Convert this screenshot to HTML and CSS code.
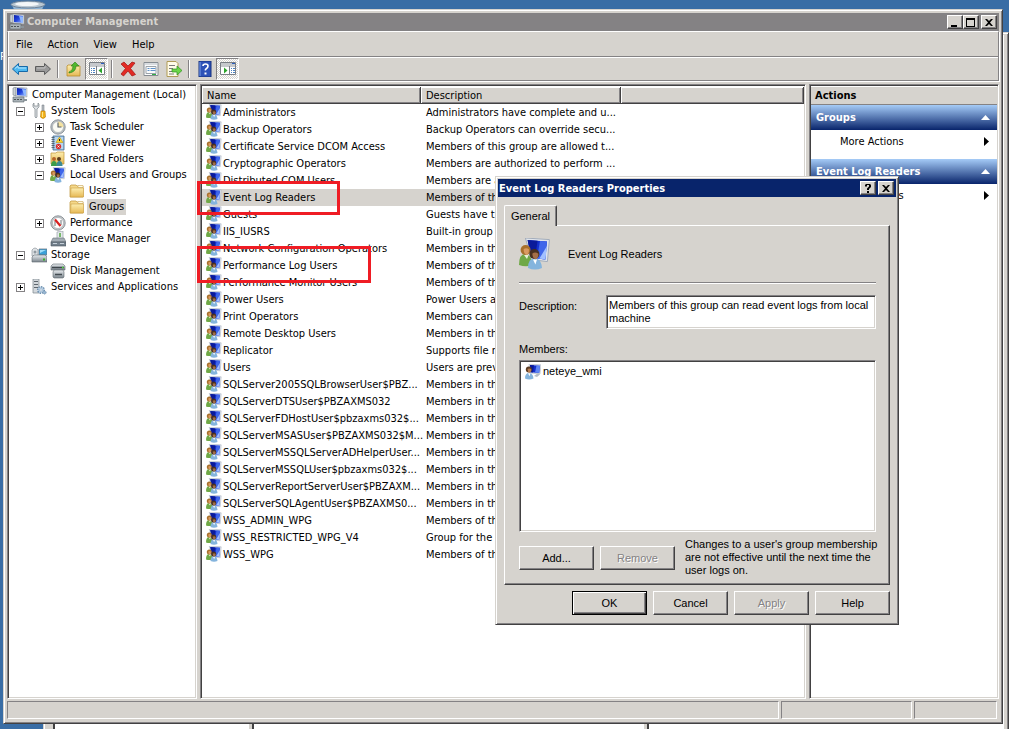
FILE: index.html
```html
<!DOCTYPE html>
<html lang="en">
  <head>
    <meta charset="UTF-8" />
    <title>Computer Management</title>
    <link rel="stylesheet" href="styles.css">
  </head>
  <body>
    <svg class="sprite" aria-hidden="true">
      <defs>
        <linearGradient id="screen" x1="0" y1="0" x2="1" y2="1">
          <stop offset="0" stop-color="#0a1ea8" />
          <stop offset="0.5" stop-color="#2448e0" />
          <stop offset="1" stop-color="#a9c8ff" />
        </linearGradient>
        <linearGradient id="manila" x1="0" y1="0" x2="0" y2="1">
          <stop offset="0" stop-color="#fdeeb0" />
          <stop offset="1" stop-color="#e6b955" />
        </linearGradient>
        <linearGradient id="metal" x1="0" y1="0" x2="0" y2="1">
          <stop offset="0" stop-color="#e8ecef" />
          <stop offset="1" stop-color="#7b858d" />
        </linearGradient>
      </defs>
      <symbol id="i-computer" viewBox="0 0 16 16">
        <path d="M1 1l3-1v9l-3-1z" fill="#c9cfd4" stroke="#7b848c" stroke-width=".6" />
        <path d="M4 0l11 1v9l-11-1z" fill="#d5dae0" stroke="#8f98a3" stroke-width=".5" />
        <path d="M5 1l9 1v7l-9-1z" fill="url(#screen)" />
        <path d="M10 2l4 .4v6l-2-.3z" fill="#8fb8ff" />
        <path d="M1 10h11v5h-11z" fill="#a9b2b7" stroke="#5d666d" stroke-width=".6" />
        <path d="M2 12.500h9" stroke="#4c5459" stroke-dasharray="2 1" />
        <path d="M12 13h3" stroke="#8b949a" stroke-width="2" />
      </symbol>
      <symbol id="i-tools" viewBox="0 0 16 16">
        <path d="M2 1v3l2 2v8q1 2 2 0v-8l2-2v-3l-1-1v3h-4v-3z" fill="#dde1e4" stroke="#7c858b" stroke-width=".7" />
        <path d="M11 2h2v6h-2z" fill="#b9bfc3" stroke="#6b7378" stroke-width=".5" />
        <path d="M10 8h4l.5 6q-2.500 3-5 0z" fill="#f4b41a" stroke="#b87804" stroke-width=".6" />
        <path d="M11.500 9v5" stroke="#ffe58a" />
      </symbol>
      <symbol id="i-clock" viewBox="0 0 16 16">
        <circle cx="8" cy="8" r="7.200" fill="#b9bec3" stroke="#7e868c" stroke-width=".8" />
        <circle cx="8" cy="8" r="5.500" fill="#fbfbf4" stroke="#98a0a6" stroke-width=".5" />
        <path d="M8 8V2.500a5.500 5.500 0 0 1 5.500 5.500z" fill="#f4e2a0" />
        <path d="M8 3.500v4.500h3.500" fill="none" stroke="#545c63" stroke-width="1.100" />
      </symbol>
      <symbol id="i-event" viewBox="0 0 16 16">
        <path d="M3 1h11v14h-11z" fill="#9cc3e6" stroke="#43688c" stroke-width=".8" />
        <path d="M5 3h8M5 5h8M5 7h8M5 9h8M5 11h8M5 13h8" stroke="#e3f0fb" stroke-width=".8" />
        <path d="M1.500 2.500h3M1.500 4.500h3M1.500 6.500h3M1.500 8.500h3M1.500 10.500h3M1.500 12.500h3" stroke="#4a545e" stroke-width=".8" />
        <path d="M9.500 2l3.500 5.500h-7z" fill="#ffd42a" stroke="#b08a00" stroke-width=".5" />
        <path d="M9.500 4v2" stroke="#222" />
        <circle cx="8.500" cy="11.500" r="2.700" fill="#d8302f" />
        <path d="M7.500 10.500l2 2m0-2l-2 2" stroke="#fff" stroke-width=".8" />
      </symbol>
      <symbol id="i-folder" viewBox="0 0 16 16">
        <path d="M1 3l1-1h5l1 1h6v11h-13z" fill="#f4d88a" stroke="#bf9435" stroke-width=".7" />
        <path d="M9 2.500h5v2h-5z" fill="#fffbe6" stroke="#c9a557" stroke-width=".5" />
        <path d="M2 5h12.500v9h-13z" fill="url(#manila)" stroke="#c99e42" stroke-width=".6" />
      </symbol>
      <symbol id="i-shared" viewBox="0 0 16 16">
        <path d="M1 2h5l1-1h7v12h-13z" fill="url(#manila)" stroke="#bf9435" stroke-width=".7" />
        <circle cx="4" cy="8" r="2" fill="#b5662a" />
        <path d="M1 15q0-5 3-5t3 5z" fill="#3c9c4a" />
        <circle cx="9" cy="8" r="2" fill="#5c3b1d" />
        <path d="M6.500 15q0-5 3-5t3 5z" fill="#3c8a94" />
      </symbol>
      <symbol id="i-users" viewBox="0 0 16 16">
        <path d="M3.200 0l12 .8-1 11-8-1z" fill="#dfe4ec" stroke="#a3adbb" stroke-width=".5" />
        <path d="M4.300 1l9.700.7-.8 9-7.200-.8z" fill="#1430cc" />
        <path d="M4.300 1l5 .4-1.300 8.800-2-.3z" fill="#0a1a9a" />
        <path d="M10.500 1.500l3.500.2-.8 9-4.200-.5z" fill="#3f66ea" />
        <path d="M14 4l-.8 6.700-3-.4z" fill="#a3c1ff" />
        <path d="M0 13.500q0-5.500 3-5.500t4 5.500q-3.500 1.200-7 0z" fill="#6fa846" />
        <path d="M2.500 8.500l1.500 2 .8-2z" fill="#e8f2d8" />
        <circle cx="3.300" cy="6" r="2.500" fill="#a8702c" />
        <path d="M2.300 5.500q1.500-1 2.700.3 0 2.500-1.200 2.700-1.500-.5-1.500-3z" fill="#d99a62" />
        <path d="M4.500 15q0-4.700 3.300-4.700t3.700 4.700q-3.500 1.500-7 0z" fill="#84b4dd" />
        <path d="M7 10.700h2l-.8 2.500z" fill="#fff" />
        <circle cx="7.700" cy="8" r="2.500" fill="#49301f" />
        <path d="M6.700 7.700q1.500-1 3 .2 0 2.500-1.500 2.700-1.500-.4-1.500-2.900z" fill="#a56f48" />
      </symbol>
      <symbol id="i-user" viewBox="0 0 16 16">
        <path d="M4 0l12 .8-1 9.200-10-1z" fill="#dfe4ec" stroke="#a3adbb" stroke-width=".5" />
        <path d="M5 1l10 .7-.8 7.300-8.700-.8z" fill="#1430cc" />
        <path d="M5 1l4 .3-1 7.200-2.500-.3z" fill="#0a1a9a" />
        <path d="M11.500 1.500l3.500.2-.8 7.300-4.200-.4z" fill="#5f86f4" />
        <path d="M9 12l4-3 2 1.500-3 2.500z" fill="#b5bdc7" />
        <path d="M0 14.500q0-5.500 4-5.500t4.500 5.500q-4.500 2-8.500 0z" fill="#84b4dd" />
        <path d="M3 9.300h2.500l-1 3z" fill="#fff" />
        <circle cx="3.800" cy="5.500" r="3" fill="#5a3a22" />
        <path d="M2.500 5q2-1.200 3.800.3 0 3.200-1.800 3.400-2-.5-2-3.700z" fill="#b87d50" />
      </symbol>
      <symbol id="i-perf" viewBox="0 0 16 16">
        <circle cx="8" cy="8" r="7.200" fill="#c7cbce" stroke="#777f85" stroke-width=".8" />
        <circle cx="8" cy="8" r="5.500" fill="#fff" stroke="#8b9399" stroke-width=".5" />
        <path d="M5 11v-5M11 10v-5" stroke="#4a5157" stroke-width=".8" />
        <path d="M5 4.500l5.500 6.500" stroke="#d92020" stroke-width="2.200" />
      </symbol>
      <symbol id="i-device" viewBox="0 0 16 16">
        <path d="M7 1l6-1v8h-6z" fill="#e6eaed" stroke="#8a939a" stroke-width=".6" />
        <path d="M10 2v4" stroke="#52a83f" stroke-width="1.500" />
        <path d="M3 7h11l2 4h-15z" fill="#a4adb5" stroke="#69727a" stroke-width=".6" />
        <path d="M1 11h15v4h-15z" fill="#73808c" stroke="#48525b" stroke-width=".6" />
        <path d="M3 12.500h4M10 12.500h4" stroke="#c6d0d9" />
      </symbol>
      <symbol id="i-storage" viewBox="0 0 16 16">
        <path d="M1 3q3-4 6 0v6h-6z" fill="#dfe3e6" stroke="#7e878e" stroke-width=".6" />
        <circle cx="4" cy="5" r="1.500" fill="#8f989f" />
        <path d="M8 2h8v6h-8z" fill="#3aa0d8" stroke="#6d7a85" stroke-width=".8" />
        <path d="M9 3h6l-6 3z" fill="#9fdcf7" />
        <path d="M1 10l2-2h11l2 2v5h-15z" fill="url(#metal)" stroke="#5f686f" stroke-width=".6" />
        <path d="M12 12.500h2" stroke="#37b02c" stroke-width="2" />
      </symbol>
      <symbol id="i-disk" viewBox="0 0 16 16">
        <path d="M1 3l2-2h10l2 2v4h-14z" fill="url(#metal)" stroke="#5f686f" stroke-width=".6" />
        <path d="M2 4.500h12" stroke="#3e464c" stroke-width="1.500" />
        <path d="M12 4.500h1.500" stroke="#4ade35" stroke-width="1.500" />
        <path d="M3 9l1-2h9l1 2v5l-1 1h-9l-1-1z" fill="url(#metal)" stroke="#5f686f" stroke-width=".6" />
        <path d="M5 11.500h7" stroke="#444c52" stroke-width="1.500" />
      </symbol>
      <symbol id="i-services" viewBox="0 0 16 16">
        <path d="M2 0h6v14h-6z" fill="#d3d8dc" stroke="#7d868d" stroke-width=".7" />
        <path d="M3 2.500h4M3 5.500h4M3 8.500h4" stroke="#5d666d" />
        <circle cx="10" cy="11" r="3.300" fill="#bcd2e6" stroke="#6f91b0" stroke-width="1.500" stroke-dasharray="1.500 1" />
        <circle cx="10" cy="11" r="1.200" fill="#fff" stroke="#6f91b0" stroke-width=".5" />
        <circle cx="13.500" cy="13.500" r="1.600" fill="#9bb9d4" stroke="#6f91b0" stroke-dasharray="1 .6" />
      </symbol>
    </svg>

    <div class="desktop">
      <svg class="recycle-bin" viewBox="0 0 36 12" aria-hidden="true">
        <path d="M2 5l3 7h26l3-7z" fill="#8fb3d3" />
        <ellipse cx="18" cy="4.500" rx="17" ry="3.500" fill="#b9c7d2" stroke="#6c8299" />
        <ellipse cx="17" cy="4" rx="12" ry="2" fill="#f3f6f8" />
      </svg>
      <span class="desktop-label">P</span>
      <div class="back-window">
        <div class="back-pane narrow"></div>
        <div class="back-pane middle"></div>
        <div class="back-pane"></div>
      </div>

      <main class="window">
        <header class="titlebar inactive">
          <svg class="icon"><use href="#i-computer" /></svg>
          <h1>Computer Management</h1>
          <div class="caption-buttons">
            <button class="caption" aria-label="Minimize"><svg viewBox="0 0 10 9"><path d="M1 7h6v2h-6z" /></svg></button>
            <button class="caption" aria-label="Maximize"><svg viewBox="0 0 10 9"><path d="M0 0h9v9h-9zM1 2v6h7v-6z" fill-rule="evenodd" /></svg></button>
            <button class="caption close" aria-label="Close"><svg viewBox="0 0 10 9"><path d="M1 1h2l2 2 2-2h2l-3 3.500 3 3.500h-2l-2-2-2 2h-2l3-3.500z" /></svg></button>
          </div>
        </header>

        <div class="bars">
          <nav class="menubar">
            <button>File</button>
            <button>Action</button>
            <button>View</button>
            <button>Help</button>
          </nav>
          <div class="toolbar">
            <button aria-label="Back"><svg viewBox="0 0 16 16"><path d="M.5 8l6-5.500v3h9v5h-9v3z" fill="#4db8f0" stroke="#1769a8" /><path d="M3 7.500l3-2.500v2h8" fill="none" stroke="#b5e6ff" /></svg></button>
            <button aria-label="Forward"><svg viewBox="0 0 16 16"><path d="M15.500 8l-6-5.500v3h-9v5h9v3z" fill="#999" stroke="#5c5c5c" /><path d="M2 7h8v-2" fill="none" stroke="#c4c4c4" /></svg></button>
            <span class="separator"></span>
            <button aria-label="Up one level"><svg viewBox="0 0 16 16"><path d="M1 5l1-1h5l1 1h6v10h-13z" fill="url(#manila)" stroke="#b98d2e" stroke-width=".8" /><path d="M3 11q4-1 4-6h-2l4-4 4 4h-3q0 6-7 7z" fill="#51b72e" stroke="#2c7d15" stroke-width=".6" /></svg></button>
            <button class="pressed" aria-label="Show console tree"><svg viewBox="0 0 16 16"><path d="M.5 1.500h15v12h-15z" fill="#fff" stroke="#7a7f85" /><path d="M1 3h14M1 5h14" stroke="#8d9299" /><path d="M12 2.500h3" stroke="#2c60c0" /><path d="M7.500 5v8.500" stroke="#7a7f85" /><path d="M2 7.500h4M2 9.500h4M2 11.500h4" stroke="#4d82c0" stroke-dasharray="1 1 3 0" /><path d="M13 6.500v6l-3.500-3z" fill="#2ba52b" /></svg></button>
            <span class="separator"></span>
            <button aria-label="Delete"><svg viewBox="0 0 16 16"><path d="M1 3l3-2 4 4 4-4 3 1-4.500 5.500 5 6-3.500 1.500-4-5-4.500 5-2.500-2 4.500-5.500z" fill="#e32b24" stroke="#9e1411" stroke-width=".7" /></svg></button>
            <button aria-label="Properties"><svg viewBox="0 0 16 16"><path d="M1 1.500h14v13h-14z" fill="#fafbfc" stroke="#868c92" /><path d="M1.500 3h13" stroke="#b6bcc2" /><path d="M3 5.500h10v7h-10z" fill="none" stroke="#9ba2a8" /><path d="M4.500 7.500h2m1 0h5M4.500 9.500h2m1 0h5" stroke="#5f92ca" /><path d="M9 13.500h4" stroke="#2fae46" /></svg></button>
            <button aria-label="Export list"><svg viewBox="0 0 16 16"><path d="M1 .5h9l2 2v13h-11z" fill="#fffbe8" stroke="#b09a55" /><path d="M3 4.500h6M3 7.500h4M3 10.500h4M3 13h5" stroke="#7c7c7c" /><path d="M6 8h5v-3l5 4.500-5 4.500v-3h-5z" fill="#6cd548" stroke="#2f9020" stroke-width=".7" /></svg></button>
            <span class="separator"></span>
            <button aria-label="Help"><svg viewBox="0 0 16 16"><path d="M2 0h12v16h-12z" fill="#2d52b8" stroke="#17307c" /><path d="M3 1v14" stroke="#7ba0ea" /><path d="M6 5q0-2 2.500-2t2.500 2q0 1.500-1.500 2.500t-1 2" fill="none" stroke="#fff" stroke-width="1.600" /><path d="M7.500 11.500h2v2h-2z" fill="#fff" /></svg></button>
            <button class="pressed" aria-label="Show action pane"><svg viewBox="0 0 16 16"><path d="M.5 1.500h15v12h-15z" fill="#fff" stroke="#7a7f85" /><path d="M1 3h14M1 5h14" stroke="#8d9299" /><path d="M12 2.500h3" stroke="#2c60c0" /><path d="M9.500 5v8.500" stroke="#7a7f85" /><path d="M11 7.500h4M11 9.500h4M11 11.500h4" stroke="#4d82c0" stroke-dasharray="1 1 3 0" /><path d="M4 6.500v6l3.500-3z" fill="#2ba52b" /></svg></button>
          </div>
        </div>

        <div class="panes">
          <nav class="pane tree">
            <div class="node"><svg class="icon"><use href="#i-computer" /></svg><span>Computer Management (Local)</span></div>
            <ul>
              <li>
                <div class="node"><button class="toggle open" aria-label="Collapse"></button><svg class="icon"><use href="#i-tools" /></svg><span>System Tools</span></div>
                <ul>
                  <li><div class="node"><button class="toggle" aria-label="Expand"></button><svg class="icon"><use href="#i-clock" /></svg><span>Task Scheduler</span></div></li>
                  <li><div class="node"><button class="toggle" aria-label="Expand"></button><svg class="icon"><use href="#i-event" /></svg><span>Event Viewer</span></div></li>
                  <li><div class="node"><button class="toggle" aria-label="Expand"></button><svg class="icon"><use href="#i-shared" /></svg><span>Shared Folders</span></div></li>
                  <li>
                    <div class="node"><button class="toggle open" aria-label="Collapse"></button><svg class="icon"><use href="#i-users" /></svg><span>Local Users and Groups</span></div>
                    <ul>
                      <li><div class="node leaf"><svg class="icon"><use href="#i-folder" /></svg><span>Users</span></div></li>
                      <li><div class="node leaf"><svg class="icon"><use href="#i-folder" /></svg><span class="selected">Groups</span></div></li>
                    </ul>
                  </li>
                  <li><div class="node"><button class="toggle" aria-label="Expand"></button><svg class="icon"><use href="#i-perf" /></svg><span>Performance</span></div></li>
                  <li><div class="node leaf"><svg class="icon"><use href="#i-device" /></svg><span>Device Manager</span></div></li>
                </ul>
              </li>
              <li>
                <div class="node"><button class="toggle open" aria-label="Collapse"></button><svg class="icon"><use href="#i-storage" /></svg><span>Storage</span></div>
                <ul>
                  <li><div class="node leaf"><svg class="icon"><use href="#i-disk" /></svg><span>Disk Management</span></div></li>
                </ul>
              </li>
              <li><div class="node"><button class="toggle" aria-label="Expand"></button><svg class="icon"><use href="#i-services" /></svg><span>Services and Applications</span></div></li>
            </ul>
          </nav>

          <section class="pane list">
            <table>
              <thead>
                <tr><th class="col-name">Name</th><th class="col-desc">Description</th><th></th></tr>
              </thead>
              <tbody>
                <tr><td><svg class="icon"><use href="#i-users" /></svg>Administrators</td><td>Administrators have complete and u...</td><td></td></tr>
                <tr><td><svg class="icon"><use href="#i-users" /></svg>Backup Operators</td><td>Backup Operators can override secu...</td><td></td></tr>
                <tr><td><svg class="icon"><use href="#i-users" /></svg>Certificate Service DCOM Access</td><td>Members of this group are allowed t...</td><td></td></tr>
                <tr><td><svg class="icon"><use href="#i-users" /></svg>Cryptographic Operators</td><td>Members are authorized to perform ...</td><td></td></tr>
                <tr><td><svg class="icon"><use href="#i-users" /></svg>Distributed COM Users</td><td>Members are allowed to launch, acti...</td><td></td></tr>
                <tr class="current"><td><svg class="icon"><use href="#i-users" /></svg>Event Log Readers</td><td>Members of this group can read eve...</td><td></td></tr>
                <tr><td><svg class="icon"><use href="#i-users" /></svg>Guests</td><td>Guests have the same access as me...</td><td></td></tr>
                <tr><td><svg class="icon"><use href="#i-users" /></svg>IIS_IUSRS</td><td>Built-in group used by Internet Info...</td><td></td></tr>
                <tr><td><svg class="icon"><use href="#i-users" /></svg>Network Configuration Operators</td><td>Members in this group can have so...</td><td></td></tr>
                <tr><td><svg class="icon"><use href="#i-users" /></svg>Performance Log Users</td><td>Members of this group may schedule...</td><td></td></tr>
                <tr><td><svg class="icon"><use href="#i-users" /></svg>Performance Monitor Users</td><td>Members of this group can access p...</td><td></td></tr>
                <tr><td><svg class="icon"><use href="#i-users" /></svg>Power Users</td><td>Power Users are included for back...</td><td></td></tr>
                <tr><td><svg class="icon"><use href="#i-users" /></svg>Print Operators</td><td>Members can administer domain prin...</td><td></td></tr>
                <tr><td><svg class="icon"><use href="#i-users" /></svg>Remote Desktop Users</td><td>Members in this group are granted ...</td><td></td></tr>
                <tr><td><svg class="icon"><use href="#i-users" /></svg>Replicator</td><td>Supports file replication in a domain</td><td></td></tr>
                <tr><td><svg class="icon"><use href="#i-users" /></svg>Users</td><td>Users are prevented from making a...</td><td></td></tr>
                <tr><td><svg class="icon"><use href="#i-users" /></svg>SQLServer2005SQLBrowserUser$PBZ...</td><td>Members in the group have the req...</td><td></td></tr>
                <tr><td><svg class="icon"><use href="#i-users" /></svg>SQLServerDTSUser$PBZAXMS032</td><td>Members in the group have the req...</td><td></td></tr>
                <tr><td><svg class="icon"><use href="#i-users" /></svg>SQLServerFDHostUser$pbzaxms032$...</td><td>Members in the group have the req...</td><td></td></tr>
                <tr><td><svg class="icon"><use href="#i-users" /></svg>SQLServerMSASUser$PBZAXMS032$M...</td><td>Members in the group have the req...</td><td></td></tr>
                <tr><td><svg class="icon"><use href="#i-users" /></svg>SQLServerMSSQLServerADHelperUser...</td><td>Members in the group have the req...</td><td></td></tr>
                <tr><td><svg class="icon"><use href="#i-users" /></svg>SQLServerMSSQLUser$pbzaxms032$...</td><td>Members in the group have the req...</td><td></td></tr>
                <tr><td><svg class="icon"><use href="#i-users" /></svg>SQLServerReportServerUser$PBZAXM...</td><td>Members in the group have the req...</td><td></td></tr>
                <tr><td><svg class="icon"><use href="#i-users" /></svg>SQLServerSQLAgentUser$PBZAXMS0...</td><td>Members in the group have the req...</td><td></td></tr>
                <tr><td><svg class="icon"><use href="#i-users" /></svg>WSS_ADMIN_WPG</td><td>Members of this group have write a...</td><td></td></tr>
                <tr><td><svg class="icon"><use href="#i-users" /></svg>WSS_RESTRICTED_WPG_V4</td><td>Group for the Windows SharePoint ...</td><td></td></tr>
                <tr><td><svg class="icon"><use href="#i-users" /></svg>WSS_WPG</td><td>Members of this group have read ac...</td><td></td></tr>
              </tbody>
            </table>
          </section>

          <aside class="pane actions">
            <h2>Actions</h2>
            <button class="group-head">Groups<svg viewBox="0 0 9 5"><path d="M0 5l4.500-5 4.500 5z" fill="#fff" /></svg></button>
            <button class="action">More Actions<svg viewBox="0 0 5 9"><path d="M0 0l5 4.500-5 4.500z" /></svg></button>
            <button class="group-head">Event Log Readers<svg viewBox="0 0 9 5"><path d="M0 5l4.500-5 4.500 5z" fill="#fff" /></svg></button>
            <button class="action">More Actions<svg viewBox="0 0 5 9"><path d="M0 0l5 4.500-5 4.500z" /></svg></button>
          </aside>
        </div>

        <footer class="statusbar">
          <div class="status-main"></div>
          <div class="status-mid"></div>
          <div class="status-end"></div>
        </footer>
      </main>

      <div class="marker marker-event"></div>
      <div class="marker marker-perf"></div>

      <section class="dialog" role="dialog" aria-labelledby="dialogTitle">
        <header class="titlebar">
          <h2 id="dialogTitle">Event Log Readers Properties</h2>
          <div class="caption-buttons">
            <button class="caption" aria-label="Help"><svg viewBox="0 0 10 9"><path d="M2 2.500v-1.500l1-1h4l1 1v2l-2 2v1h-2v-1.500l2-2v-1.500h-2v1.500zM4 7h2v2h-2z" /></svg></button>
            <button class="caption close" aria-label="Close"><svg viewBox="0 0 10 9"><path d="M1 1h2l2 2 2-2h2l-3 3.500 3 3.500h-2l-2-2-2 2h-2l3-3.500z" /></svg></button>
          </div>
        </header>
        <div class="dialog-body">
          <button class="tab" role="tab">General</button>
          <div class="tab-page">
            <div class="group-title">
              <svg class="icon-large"><use href="#i-users" /></svg>
              <span>Event Log Readers</span>
            </div>
            <hr />
            <div class="field">
              <label for="description">Description:</label>
              <textarea id="description">Members of this group can read event logs from local machine</textarea>
            </div>
            <h3 id="membersLabel">Members:</h3>
            <ul class="members" aria-labelledby="membersLabel">
              <li><svg class="icon"><use href="#i-user" /></svg>neteye_wmi</li>
            </ul>
            <div class="member-actions">
              <button class="btn">Add...</button>
              <button class="btn" disabled>Remove</button>
              <p>Changes to a user's group membership are not effective until the next time the user logs on.</p>
            </div>
          </div>
          <div class="dialog-buttons">
            <button class="btn default">OK</button>
            <button class="btn">Cancel</button>
            <button class="btn" disabled>Apply</button>
            <button class="btn">Help</button>
          </div>
        </div>
      </section>
    </div>
  </body>
</html>
```
FILE: styles.css
```css
:root {
  --face: #d6d3ce;
  --light: #ffffff;
  --shadow: #848284;
  --dark: #424142;
  --desktop: #396da5;
  --navy: #08246b;
  --mark: #ef1c24;
}

* {
  box-sizing: border-box;
}

body {
  margin: 0;
  font-family: "DejaVu Sans Condensed", "DejaVu Sans", sans-serif;
  font-size: 11px;
  line-height: 16px;
  color: #000;
}

button {
  margin: 0;
  padding: 0;
  border: none;
  background: none;
  font: inherit;
  color: inherit;
}

h1,
h2,
h3,
p,
ul {
  margin: 0;
  padding: 0;
  font-size: 11px;
}

ul {
  list-style: none;
}

.sprite {
  position: absolute;
  width: 0;
  height: 0;
}

.icon {
  flex: none;
  width: 16px;
  height: 16px;
}

/* Desktop and the windows on it */
.desktop {
  position: relative;
  height: 100vh;
  overflow: hidden;
  background: var(--desktop);
}

.recycle-bin {
  position: absolute;
  left: 10px;
  top: 0;
  width: 36px;
  height: 12px;
}

.desktop-label {
  position: absolute;
  left: 0;
  top: 49px;
  color: #fff;
}

.back-window {
  position: absolute;
  left: 43px;
  right: 0;
  top: 32px;
  bottom: -20px;
  display: flex;
  gap: 3px;
  padding: 2px 4px 2px 2px;
  background: var(--face);
  border: 1px solid var(--face);
  border-right-color: var(--dark);
  box-shadow: inset 1px 1px var(--light), inset -1px -1px var(--shadow);
}

.back-pane {
  flex: 1;
  background: #fff;
  border: 2px solid var(--light);
  border-left: 2px solid var(--dark);
}

.back-pane.narrow {
  flex: none;
  width: 196px;
  margin-left: 7px;
}

.back-pane.middle {
  flex: none;
  width: 392px;
}

.window,
.dialog {
  position: absolute;
  display: flex;
  flex-direction: column;
  padding: 3px;
  background: var(--face);
  border: 1px solid var(--face);
  border-right-color: var(--dark);
  border-bottom-color: var(--dark);
  box-shadow: inset 1px 1px var(--light), inset -1px -1px var(--shadow);
}

.window {
  left: 3px;
  right: 6px;
  top: 9px;
  bottom: 5px;
}

/* Title bar */
.titlebar {
  display: flex;
  align-items: center;
  gap: 2px;
  height: 18px;
  padding: 0 2px;
  background: var(--navy);
  color: #fff;
}

.titlebar.inactive {
  background: var(--shadow);
  color: var(--face);
}

.titlebar h1,
.titlebar h2 {
  flex: 1;
}

.caption-buttons {
  display: flex;
}

.caption {
  display: flex;
  align-items: center;
  justify-content: center;
  width: 16px;
  height: 14px;
  background: var(--face);
  border: 1px solid var(--light);
  border-right-color: var(--dark);
  border-bottom-color: var(--dark);
  box-shadow: inset -1px -1px var(--shadow);
}

.caption.close {
  margin-left: 2px;
}

.caption svg {
  width: 10px;
  height: 9px;
}

/* Menu and toolbar */
.bars {
  border: 1px solid var(--shadow);
  border-top-color: var(--light);
  box-shadow: 1px 1px var(--light), inset 1px 0 var(--light);
}

.menubar {
  display: flex;
  gap: 15px;
  height: 25px;
  padding: 2px 8px 0;
  border-bottom: 1px solid var(--shadow);
}

.toolbar {
  display: flex;
  align-items: center;
  height: 23px;
  border-top: 1px solid var(--light);
}

.toolbar button {
  display: flex;
  align-items: center;
  justify-content: center;
  width: 23px;
  height: 22px;
}

.toolbar svg {
  width: 16px;
  height: 16px;
}

.toolbar .pressed {
  border: 1px solid var(--shadow);
  border-right-color: var(--light);
  border-bottom-color: var(--light);
  background: repeating-conic-gradient(#fff 0 25%, var(--face) 0 50%) 0 0 / 2px 2px;
}

.separator {
  width: 2px;
  height: 18px;
  margin: 0 3px;
  border-left: 1px solid var(--shadow);
  border-right: 1px solid var(--light);
}

/* Panes */
.panes {
  flex: 1;
  display: flex;
  gap: 3px;
  min-height: 0;
  margin-top: 3px;
}

.pane {
  overflow: hidden;
  background: #fff;
  border: 1px solid var(--shadow);
  border-right-color: var(--light);
  border-bottom-color: var(--light);
  box-shadow: inset 1px 1px var(--dark), inset -1px -1px var(--face);
  padding: 2px 1px 1px;
}

.tree {
  flex: none;
  width: 190px;
  padding-left: 4px;
}

.tree ul ul {
  margin-left: 19px;
}

.node {
  display: flex;
  align-items: center;
  height: 16px;
  white-space: nowrap;
}

.node.leaf {
  padding-left: 19px;
}

.node span {
  margin-left: 2px;
  padding: 0 2px;
}

.node .selected {
  background: var(--face);
}

.toggle {
  flex: none;
  width: 9px;
  height: 9px;
  margin: 0 6px 0 4px;
  border: 1px solid var(--shadow);
  background: linear-gradient(#000, #000) center / 5px 1px no-repeat,
    linear-gradient(#000, #000) center / 1px 5px no-repeat, #fff;
}

.toggle.open {
  background: linear-gradient(#000, #000) center / 5px 1px no-repeat, #fff;
}

.list {
  flex: 1;
}

.list table {
  width: 100%;
  table-layout: fixed;
  border-collapse: separate;
  border-spacing: 0;
}

.list th {
  height: 17px;
  padding: 0 5px;
  line-height: 15px;
  background: var(--face);
  border-bottom: 1px solid var(--dark);
  border-right: 1px solid var(--dark);
  box-shadow: inset 1px 1px var(--light), inset -1px -1px var(--shadow);
  font-weight: normal;
  text-align: left;
}

.col-name {
  width: 219px;
}

.col-desc {
  width: 200px;
}

.list td {
  height: 17px;
  padding: 0 5px;
  line-height: 17px;
  white-space: nowrap;
}

.list td:first-child {
  padding: 0 0 0 4px;
}

.list td .icon {
  margin-right: 1px;
  vertical-align: top;
}

.list .current {
  background: var(--face);
}

.actions {
  flex: none;
  width: 190px;
}

.actions h2 {
  height: 18px;
  padding-left: 4px;
  line-height: 18px;
  background: var(--face);
  border-bottom: 1px solid var(--shadow);
}

.group-head,
.action {
  display: flex;
  align-items: center;
  justify-content: space-between;
  width: 100%;
  height: 25px;
  padding: 0 7px 0 5px;
}

.group-head {
  background: linear-gradient(#a5cbf7, var(--navy));
  color: #fff;
  font-weight: bold;
}

.group-head svg {
  width: 9px;
  height: 5px;
}

.action {
  height: 23px;
  padding: 0 8px 0 29px;
}

.action + .group-head {
  margin-top: 6px;
}

.action svg {
  width: 5px;
  height: 9px;
}

/* Status bar */
.statusbar {
  display: flex;
  gap: 2px;
  height: 19px;
  margin-top: 2px;
  padding-right: 2px;
}

.statusbar div {
  height: 18px;
  border: 1px solid var(--shadow);
  border-right-color: var(--light);
  border-bottom-color: var(--light);
}

.status-main {
  flex: 1;
}

.status-mid {
  width: 131px;
}

.status-end {
  width: 83px;
}

/* Red highlight boxes over the list */
.marker {
  position: absolute;
  left: 197px;
  height: 34px;
  border: 3px solid var(--mark);
}

.marker-event {
  top: 181px;
  width: 143px;
}

.marker-perf {
  top: 246px;
  width: 174px;
  height: 37px;
}

/* Properties dialog */
.dialog {
  left: 495px;
  top: 176px;
  width: 404px;
  padding: 2px;
  font-family: "Liberation Sans", Arial, sans-serif;
  line-height: 13px;
}

.dialog .titlebar {
  padding: 0 2px 0 1px;
  font-family: "DejaVu Sans Condensed", "DejaVu Sans", sans-serif;
}

.dialog-body {
  padding: 8px 6px 7px;
}

.tab {
  position: relative;
  display: block;
  width: 53px;
  height: 21px;
  background: var(--face);
  border: 1px solid var(--light);
  border-right-color: var(--dark);
  border-bottom: none;
  border-radius: 2px 2px 0 0;
  box-shadow: inset -1px 0 var(--shadow);
}

.tab-page {
  margin-top: -1px;
  padding: 12px 13px 7px 14px;
  border: 1px solid var(--light);
  border-right-color: var(--dark);
  border-bottom-color: var(--dark);
  box-shadow: inset -1px -1px var(--shadow);
}

.group-title {
  display: flex;
  align-items: center;
  gap: 17px;
}

.icon-large {
  width: 32px;
  height: 32px;
}

.tab-page hr {
  height: 2px;
  margin: 12px 0 11px;
  border: none;
  border-top: 1px solid var(--shadow);
  border-bottom: 1px solid var(--light);
}

.field {
  display: flex;
  justify-content: space-between;
}

.field label {
  padding-top: 5px;
}

.field textarea,
.members {
  background: #fff;
  border: 1px solid var(--shadow);
  border-right-color: var(--light);
  border-bottom-color: var(--light);
  box-shadow: inset 1px 1px var(--dark), inset -1px -1px var(--face);
}

.field textarea {
  width: 270px;
  height: 34px;
  margin: 0;
  padding: 3px 2px;
  font: inherit;
  color: inherit;
  resize: none;
  overflow: hidden;
}

.tab-page h3 {
  margin: 14px 0 4px;
  font-weight: normal;
}

.members {
  height: 172px;
  padding: 2px 5px;
}

.members li {
  display: flex;
  align-items: center;
  gap: 2px;
  height: 17px;
}

.member-actions {
  display: flex;
  gap: 6px;
  margin: 6px -10px 0 0;
}

.member-actions .btn {
  margin-top: 8px;
}

.member-actions p {
  flex: 1;
  padding-left: 4px;
}

.btn {
  flex: none;
  width: 75px;
  height: 24px;
  background: var(--face);
  border: 1px solid var(--light);
  border-right-color: var(--dark);
  border-bottom-color: var(--dark);
  box-shadow: inset -1px -1px var(--shadow);
}

.btn.default {
  border-color: #000;
  box-shadow: inset 1px 1px var(--light), inset -1px -1px var(--dark),
    inset -2px -2px var(--shadow);
}

.btn:disabled {
  color: var(--shadow);
  text-shadow: 1px 1px var(--light);
}

.dialog-buttons {
  display: flex;
  justify-content: flex-end;
  gap: 6px;
  margin-top: 6px;
}
```
